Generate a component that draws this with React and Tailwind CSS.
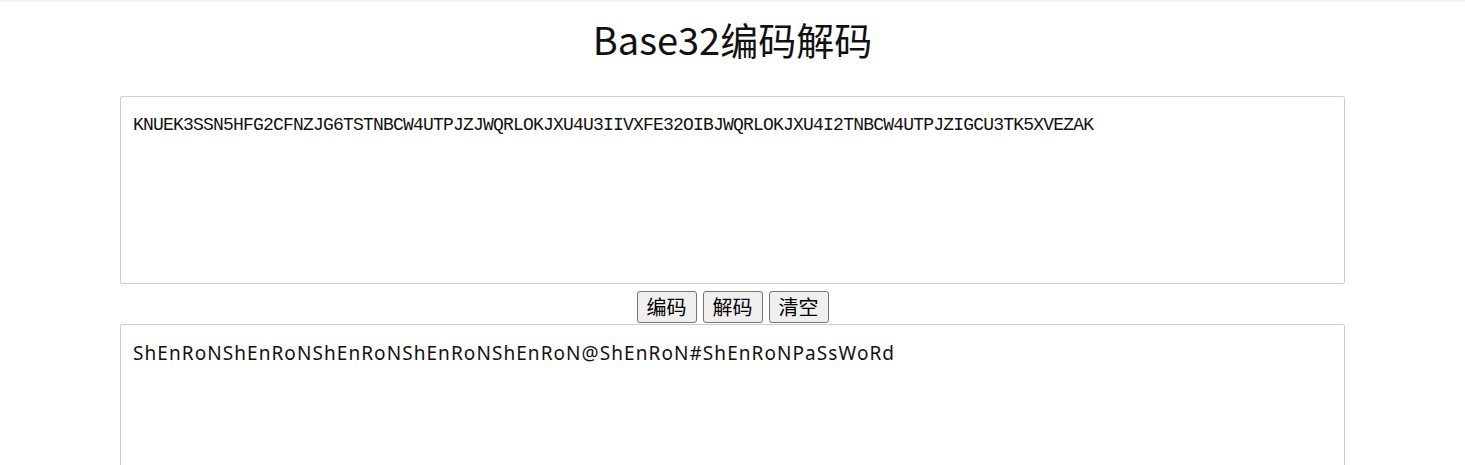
export default function App() {
  const enc = "KNUEK3SSN5HFG2CFNZJG6TSTNBCW4UTPJZJWQRLOKJXU4U3IIVXFE32OIBJWQRLOKJXU4I2TNBCW4UTPJZIGCU3TK5XVEZAK";
  const dec = "ShEnRoNShEnRoNShEnRoNShEnRoNShEnRoN@ShEnRoN#ShEnRoNPaSsWoRd";
  return (
    <div className="w-[1465px] h-[465px] overflow-hidden bg-white" style={{ fontFamily: '"Noto Sans", "Noto Sans CJK SC", sans-serif' }}>
      <div className="h-[2px] bg-[#f4f4f4]" />
      <h1 className="text-center text-[38px] leading-[52px] mt-[11px] text-[#111]" style={{ fontFamily: '"Noto Sans CJK SC", sans-serif' }}>
        Base32编码解码
      </h1>
      <div className="px-[120px] mt-[31px]">
        <div
          className="h-[188px] border border-[#cfcfcf] rounded-[2px] px-[12px] pt-[16px] text-[18px] leading-[24px] tracking-[-0.8px] text-[#111]"
          style={{ fontFamily: '"Liberation Mono", monospace' }}
        >
          {enc}
        </div>
        <div className="flex justify-center gap-[6px] mt-[7px]">
          {["编码", "解码", "清空"].map((t) => (
            <button
              key={t}
              className="h-[32px] px-[9px] bg-[#efefef] border border-[#767676] rounded-[3px] text-[20px] leading-[28px] text-black"
              style={{ fontFamily: '"Noto Sans CJK SC", sans-serif' }}
            >
              {t}
            </button>
          ))}
        </div>
        <div className="h-[200px] border border-[#cfcfcf] rounded-[2px] mt-[1px] px-[12px] pt-[16px] text-[19px] leading-[24px] tracking-[1.07px] text-[#111]">
          {dec}
        </div>
      </div>
    </div>
  );
}
